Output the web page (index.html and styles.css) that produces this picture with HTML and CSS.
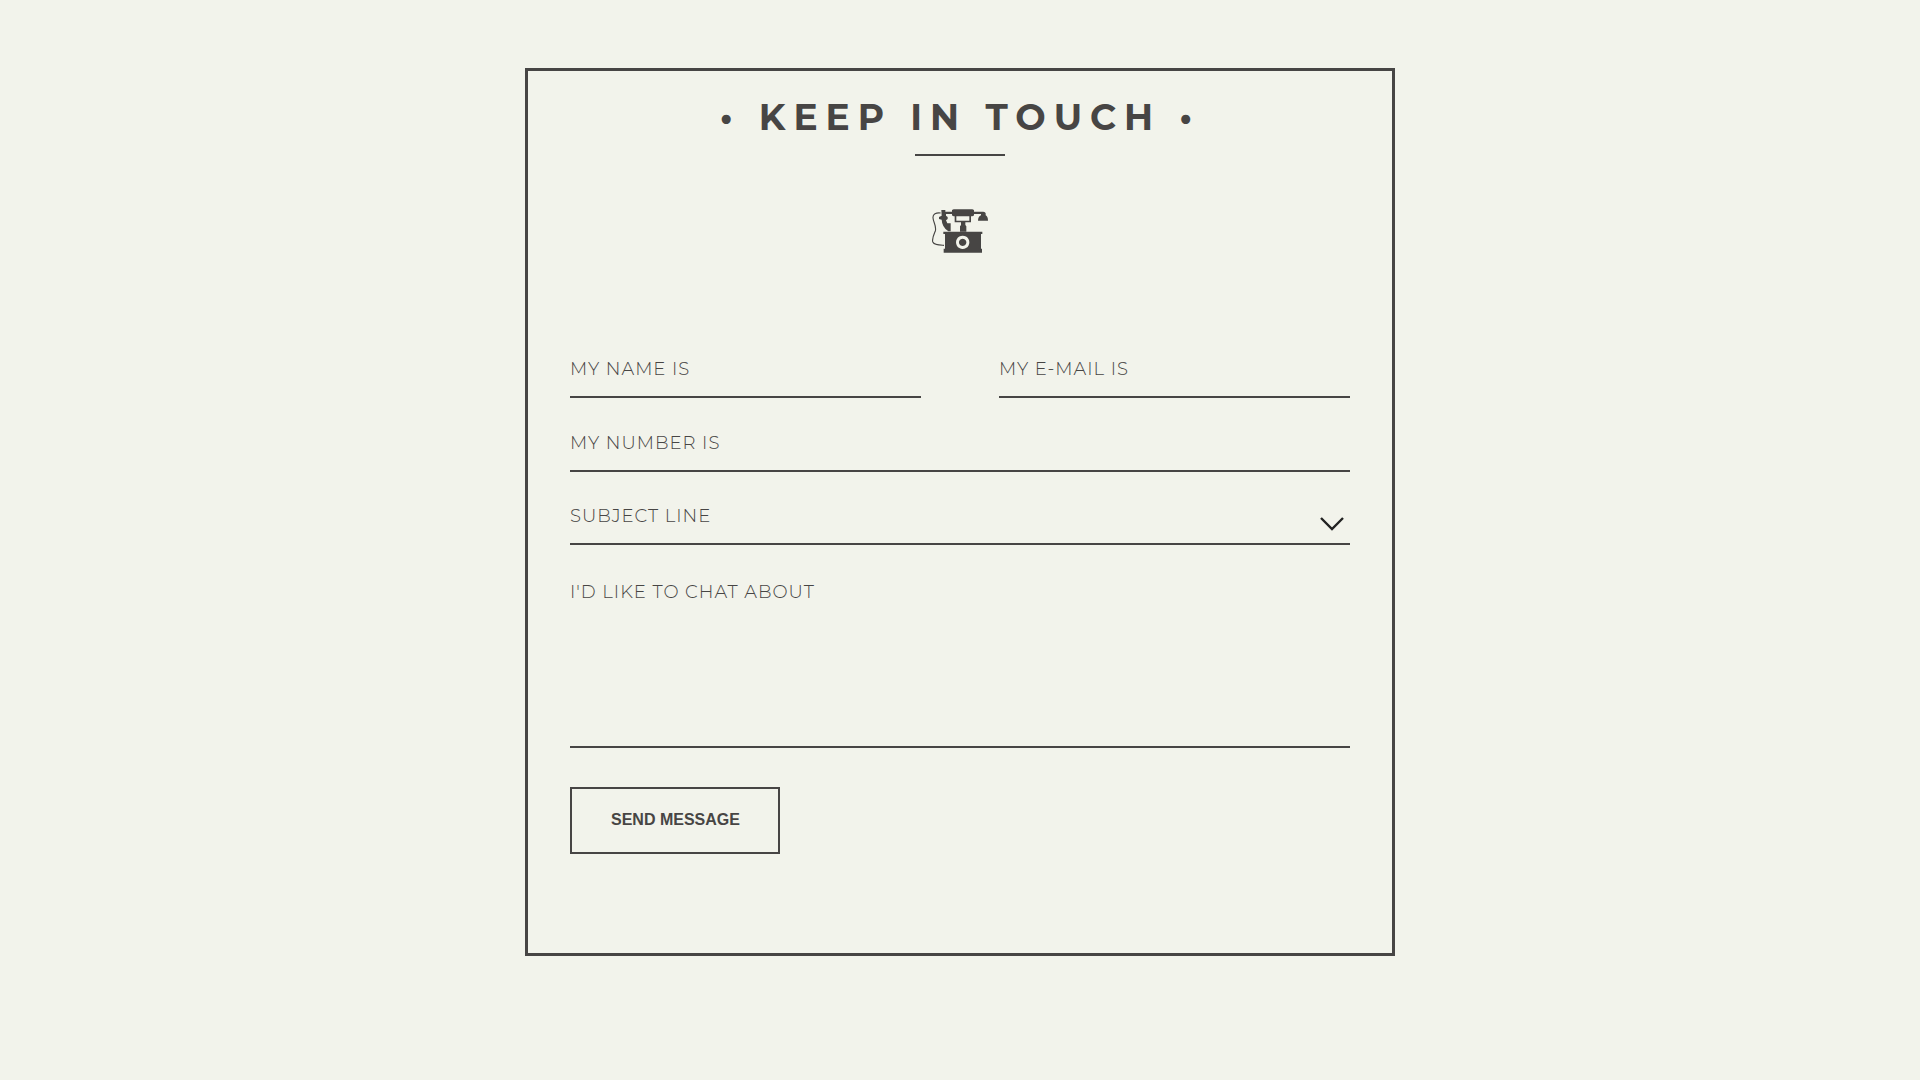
FILE: index.html
```html
<!DOCTYPE html>
<html lang="en">
<head>
<meta charset="utf-8">
<meta name="viewport" content="width=device-width, initial-scale=1">
<title>Keep in touch</title>
<link rel="stylesheet" href="styles.css">
</head>
<body>
<main class="card">
  <h1 class="title">&bull; Keep in Touch &bull;</h1>
  <div class="rule"></div>
  <svg class="phone" viewBox="36 42 168 132" aria-hidden="true">
    <path d="M62 54 C48 52 38 58 39 68 C40 84 50 92 46 108 C40 122 36 130 38 140 C42 150 56 150 72 151" fill="none" stroke="currentColor" stroke-width="3.4"/>
    <g fill="currentColor">
      <path d="M64 45h12v5h20v-4q2-3 6-3h54q4 0 6 3v4h28q6 0 7 5v6q7 4 7 16h-30q0-12 9-16v-4h-21v4q-2 3-6 3h-54q-4 0-6-3v-4H78v5l5 4v6l-5 4 4 9h10v24h-7Q66 96 65 74l-8-2v-6l8-4z"/>
      <path d="M104 62h5v15h39V62h5v20h-17v8l3 4v16h-19V94l3-4v-8h-19z"/>
      <path fill-rule="evenodd" d="M70 110h117v7h-4v44h3v12H71v-12h4v-44h-5zM128 122a20 20 0 1 0 .1 0zM128 131a11 11 0 1 1-.1 0z"/>
    </g>
  </svg>
  <form class="form">
    <div class="pair">
      <input class="field" type="text" placeholder="MY NAME IS" aria-label="My name is">
      <input class="field" type="email" placeholder="MY E-MAIL IS" aria-label="My e-mail is">
    </div>
    <input class="field" type="tel" placeholder="MY NUMBER IS" aria-label="My number is">
    <div class="picker">
      <select class="field subject" aria-label="Subject line">
        <option>SUBJECT LINE</option>
      </select>
      <svg class="chevron" viewBox="0 0 24 14" aria-hidden="true"><path d="M1 1l11 11L23 1" fill="none" stroke="currentColor" stroke-width="2.4"/></svg>
    </div>
    <textarea class="field message" placeholder="I'D LIKE TO CHAT ABOUT" aria-label="I'd like to chat about"></textarea>
    <button class="send" type="submit">SEND MESSAGE</button>
  </form>
</main>
</body>
</html>
```
FILE: styles.css
```css
* { box-sizing: border-box; }

body {
  margin: 0;
  padding: 68px 24px;
  background: #f2f3eb;
  color: #474544;
  font-family: Montserrat, Inter, sans-serif;
}

.card {
  display: flex;
  flex-direction: column;
  align-items: center;
  max-width: 870px;
  margin: 0 auto;
  padding: 24px 42px 99px;
  border: 3px solid #474544;
}

.title {
  margin: 0;
  font-size: 36px;
  line-height: 44px;
  font-weight: 700;
  letter-spacing: 8px;
  text-align: center;
  text-transform: uppercase;
}

.rule {
  width: 90px;
  height: 2px;
  margin-top: 15px;
  background: #474544;
}

.phone {
  width: 56px;
  height: 44px;
  margin: 53px 0 93px;
}

.form {
  display: flex;
  flex-direction: column;
  gap: 22px;
  width: 100%;
}

.pair {
  display: grid;
  grid-template-columns: 1fr 1fr;
  column-gap: 10%;
}

.field {
  display: block;
  width: 100%;
  height: 52px;
  margin: 0;
  padding: 11px 0 15px;
  border: 0;
  border-bottom: 2px solid #474544;
  border-radius: 0;
  outline: 0;
  appearance: none;
  background: none;
  color: #474544;
  font-family: inherit;
  font-size: 18px;
  line-height: 24px;
  font-weight: 300;
  letter-spacing: 1px;
}

.field::placeholder {
  color: #474544;
  opacity: 1;
}

.picker { position: relative; }

.subject {
  height: 51px;
  padding: 10px 0 15px;
}

.chevron {
  position: absolute;
  right: 6px;
  bottom: 14px;
  width: 24px;
  height: 14px;
  color: #222;
  pointer-events: none;
}

.message {
  height: 181px;
  padding-top: 13px;
  resize: none;
}

.send {
  align-self: flex-start;
  margin-top: 17px;
  padding: 22px 38px 23px 39px;
  border: 2px solid #474544;
  background: none;
  color: #474544;
  font-family: "Liberation Sans", Arial, sans-serif;
  font-size: 16px;
  line-height: 18px;
  font-weight: 700;
}
```
